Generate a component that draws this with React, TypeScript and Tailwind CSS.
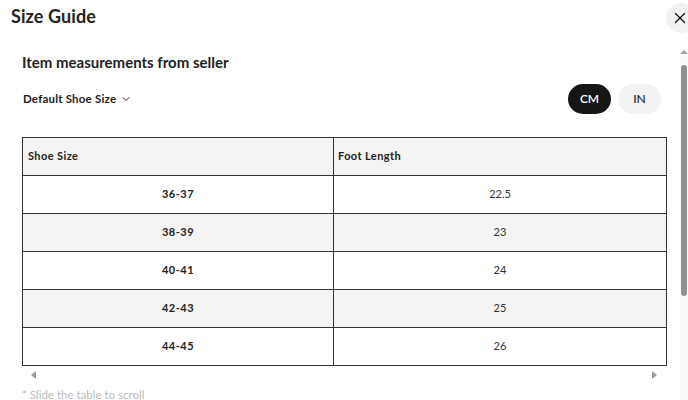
import { X, ChevronDown } from "lucide-react";

const rows = [
  { size: "36-37", length: "22.5" },
  { size: "38-39", length: "23" },
  { size: "40-41", length: "24" },
  { size: "42-43", length: "25" },
  { size: "44-45", length: "26" },
];

export default function App() {
  return (
    <div
      className="relative h-[400px] w-[688px] overflow-hidden bg-white text-[#222]"
      style={{ fontFamily: "Lato, 'Noto Sans', sans-serif" }}
    >
      {/* Header */}
      <div className="flex h-12 items-start pl-[11px] pt-[6px]">
        <h2 className="text-[18px] font-bold leading-5 tracking-[0.1px]">Size Guide</h2>
      </div>
      <button
        type="button"
        className="absolute left-[666px] top-[3px] flex h-[30px] w-[30px] items-center justify-center rounded-full bg-[#f2f2f2]"
        aria-label="Close"
      >
        <X className="-ml-[2px] h-[18px] w-[18px]" strokeWidth={1.6} color="#111" />
      </button>

      <div className="flex h-[352px]">
        {/* Scroll content */}
        <div className="flex-1 pl-[22px] pr-[13px]">
          <h3 className="mt-[4px] text-[15px] font-bold leading-5">Item measurements from seller</h3>

          <div className="mt-[12px] flex items-center justify-between">
            <button type="button" className="flex items-center gap-1 pl-px text-[11.5px] font-bold tracking-[0.2px]">
              Default Shoe Size
              <ChevronDown className="h-3 w-3" strokeWidth={2} />
            </button>
            <div className="flex gap-[7px] pr-[6px]">
              <button
                type="button"
                className="h-[30px] w-[43px] rounded-full bg-[#161616] text-[12px] font-semibold text-white"
              >
                CM
              </button>
              <button
                type="button"
                className="h-[30px] w-[43px] rounded-full bg-[#f3f3f3] text-[12px] font-semibold text-[#333]"
              >
                IN
              </button>
            </div>
          </div>

          <table className="mt-[23px] w-[645px] border-collapse">
            <thead>
              <tr className="h-[38px] bg-[#f4f4f4] text-[11px] tracking-[0.4px]">
                <th className="w-[311px] border border-[#333] pl-[5px] text-left font-bold">Shoe Size</th>
                <th className="border border-[#333] pl-[4px] text-left font-bold">Foot Length</th>
              </tr>
            </thead>
            <tbody>
              {rows.map((r, i) => (
                <tr key={r.size} className={`h-[38px] ${i % 2 === 1 ? "bg-[#f4f4f4]" : "bg-white"}`}>
                  <td className="border border-[#333] text-center text-[11px] font-bold tracking-[0.5px]">{r.size}</td>
                  <td className="border border-[#333] text-center text-[11px] text-[#333]">{r.length}</td>
                </tr>
              ))}
            </tbody>
          </table>

          {/* Horizontal scrollbar arrows */}
          <div className="flex h-[17px] items-center justify-between px-[9px]">
            <span className="h-0 w-0 border-y-[4px] border-r-[5px] border-y-transparent border-r-[#999]" />
            <span className="mr-[1px] h-0 w-0 border-y-[4px] border-l-[5px] border-y-transparent border-l-[#999]" />
          </div>

          <p className="mt-[4px] text-[11.5px] leading-4 text-[#bbb]">* Slide the table to scroll</p>
        </div>

        {/* Vertical scrollbar */}
        <div className="flex w-[8px] flex-col items-center bg-[#fafafa]">
          <span className="mt-[2px] h-0 w-0 border-x-[4px] border-b-[4px] border-x-transparent border-b-[#a3a3a3]" />
          <div className="mt-[11px] h-[231px] w-[6px] rounded-[3px] bg-[#909090]" />
        </div>
      </div>
    </div>
  );
}
